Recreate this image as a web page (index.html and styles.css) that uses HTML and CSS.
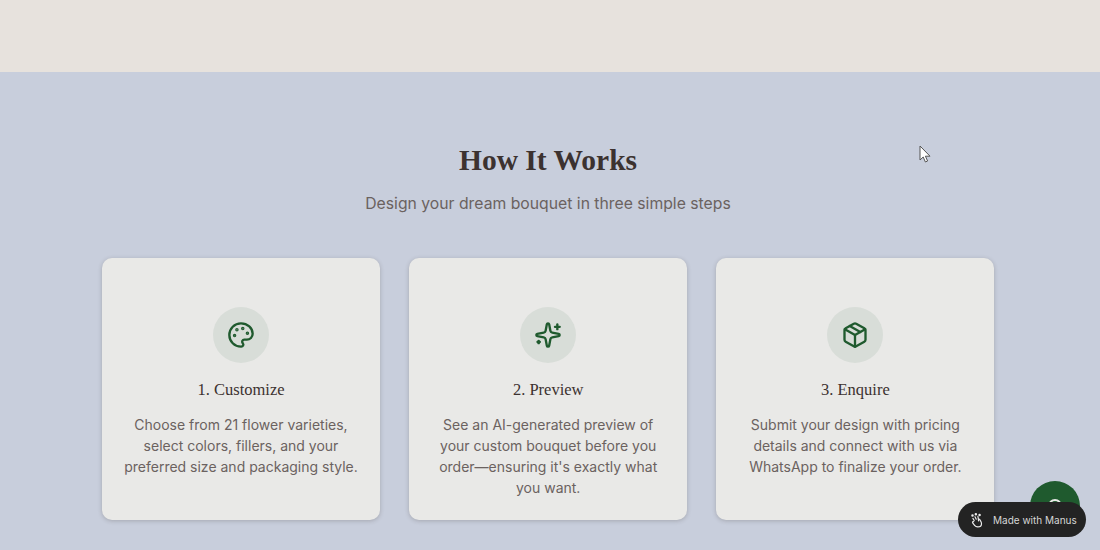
FILE: index.html
```html
<!DOCTYPE html>
<html lang="en">
<head>
    <meta charset="UTF-8">
    <meta name="viewport" content="width=device-width, initial-scale=1.0">
    <title>How It Works</title>
    <link rel="stylesheet" href="styles.css">
</head>
<body>
    <div class="top-band"></div>

    <section class="how">
        <h2>How It Works</h2>
        <p class="subtitle">Design your dream bouquet in three simple steps</p>

        <div class="steps">
            <div class="card">
                <div class="icon-wrap">
                    <svg class="icon" viewBox="0 0 24 24">
                        <path d="M12 22a1 1 0 0 1 0-20 10 9 0 0 1 10 9 5 5 0 0 1-5 5h-2.25a1.75 1.75 0 0 0-1.4 2.8l.3.4a1.75 1.75 0 0 1-1.4 2.8z"/>
                        <circle class="dot" cx="13.5" cy="6.5" r=".5"/>
                        <circle class="dot" cx="17.5" cy="10.5" r=".5"/>
                        <circle class="dot" cx="6.5" cy="12.5" r=".5"/>
                        <circle class="dot" cx="8.5" cy="7.5" r=".5"/>
                    </svg>
                </div>
                <h3>1. Customize</h3>
                <p>Choose from 21 flower varieties, select colors, fillers, and your preferred size and packaging style.</p>
            </div>

            <div class="card">
                <div class="icon-wrap">
                    <svg class="icon" viewBox="0 0 24 24">
                        <path d="M11.017 2.814a1 1 0 0 1 1.966 0l1.051 5.558a2 2 0 0 0 1.594 1.594l5.558 1.051a1 1 0 0 1 0 1.966l-5.558 1.051a2 2 0 0 0-1.594 1.594l-1.051 5.558a1 1 0 0 1-1.966 0l-1.051-5.558a2 2 0 0 0-1.594-1.594l-5.558-1.051a1 1 0 0 1 0-1.966l5.558-1.051a2 2 0 0 0 1.594-1.594z"/>
                        <path d="M20 3v4"/>
                        <path d="M22 5h-4"/>
                        <path d="M4 17v2"/>
                        <path d="M5 18H3"/>
                    </svg>
                </div>
                <h3>2. Preview</h3>
                <p>See an AI-generated preview of your custom bouquet before you order—ensuring it's exactly what you want.</p>
            </div>

            <div class="card">
                <div class="icon-wrap">
                    <svg class="icon" viewBox="0 0 24 24">
                        <path d="M11 21.73a2 2 0 0 0 2 0l7-4A2 2 0 0 0 21 16V8a2 2 0 0 0-1-1.73l-7-4a2 2 0 0 0-2 0l-7 4A2 2 0 0 0 3 8v8a2 2 0 0 0 1 1.73z"/>
                        <path d="M12 22V12"/>
                        <path d="M3.29 7 12 12l8.71-5"/>
                        <path d="m7.5 4.27 9 5.15"/>
                    </svg>
                </div>
                <h3>3. Enquire</h3>
                <p>Submit your design with pricing details and connect with us via WhatsApp to finalize your order.</p>
            </div>
        </div>
    </section>

    <!-- mouse pointer from the capture -->
    <svg class="pointer" viewBox="0 0 12 18">
        <path d="M1 1v14l3.2-3 2.2 5 2.2-1-2.2-4.8H11z"/>
    </svg>

    <div class="chat-btn"><span class="chat-glyph"></span></div>

    <div class="manus-badge">
        <svg class="manus-icon" viewBox="0 0 18 18">
            <path d="M5 9 3.500 6.500M7.500 7.500 6 4.500M10 7 9.500 4M4.500 10.500c-.8-.6-2 .3-1.300 1.300l2.300 3c1 1.300 2.300 1.900 3.800 1.900 2.700 0 4.500-1.700 4.500-3.900 0-1.200-.4-2.200-1-3.100l-1.300-2c-.5-.8-1.700-.4-1.500.5l.3 1.300"/>
            <circle cx="3" cy="3" r=".8"/>
            <circle cx="7" cy="1.500" r=".8"/>
            <circle cx="11.500" cy="2.500" r=".8"/>
        </svg>
        <span>Made with Manus</span>
    </div>
</body>
</html>
```

FILE: styles.css
```css
* {
    margin: 0;
    padding: 0;
    box-sizing: border-box;
}

html, body {
    height: 550px;
    overflow: hidden;
}

body {
    position: relative;
    background: #c8cedc;
    font-family: Inter, 'Liberation Sans', sans-serif;
}

.top-band {
    height: 72px;
    background: #e7e2dd;
}

.how {
    padding: 69px 104px 0 102px;
    text-align: center;
}

h2 {
    width: 892px;
    font-family: 'Liberation Serif', serif;
    font-size: 29.5px;
    line-height: 38px;
    font-weight: 700;
    color: #3c3230;
}

.subtitle {
    width: 892px;
    margin-top: 13px;
    font-size: 15.75px;
    line-height: 24px;
    color: #6b6260;
}

.steps {
    display: grid;
    grid-template-columns: repeat(3, 278px);
    gap: 29.2px;
    margin-top: 42px;
}

.card {
    height: 262px;
    padding: 49px 20px 0;
    background: #e9e9e7;
    border-radius: 10px;
    box-shadow: 0 1px 4px rgba(60, 50, 48, 0.25);
}

.icon-wrap {
    width: 56px;
    height: 56px;
    margin: 0 auto;
    display: flex;
    align-items: center;
    justify-content: center;
    background: #d8ddd8;
    border-radius: 50%;
}

.icon {
    width: 28px;
    height: 28px;
    fill: none;
    stroke: #1f5a2e;
    stroke-width: 2;
    stroke-linecap: round;
    stroke-linejoin: round;
}

.icon .dot {
    fill: #1f5a2e;
}

h3 {
    margin-top: 15px;
    font-family: 'Liberation Serif', serif;
    font-size: 16.5px;
    line-height: 24px;
    font-weight: 400;
    color: #3c3230;
}

.card p {
    margin-top: 12px;
    font-size: 14px;
    line-height: 21px;
    color: #6b6260;
}

.pointer {
    position: absolute;
    left: 919px;
    top: 145px;
    width: 12px;
    height: 18px;
    fill: #fff;
    stroke: #555;
    stroke-width: 1;
}

.chat-btn {
    position: absolute;
    left: 1030px;
    top: 481px;
    width: 50px;
    height: 50px;
    background: #1f5a2e;
    border-radius: 50%;
}

.chat-glyph {
    position: absolute;
    left: 18px;
    top: 18px;
    width: 14px;
    height: 14px;
    border: 2px solid #e9e9e7;
    border-radius: 50%;
}

.manus-badge {
    position: absolute;
    left: 958px;
    top: 502px;
    width: 128px;
    height: 35px;
    display: flex;
    align-items: center;
    gap: 8px;
    padding: 1px 0 0 12px;
    background: #232323;
    border-radius: 18px;
    font-size: 10px;
    white-space: nowrap;
    color: #d6d6d6;
}

.manus-icon {
    flex: none;
    width: 15px;
    height: 17px;
    fill: none;
    stroke: #eee;
    stroke-width: 1.4;
    stroke-linecap: round;
    stroke-linejoin: round;
}
```
